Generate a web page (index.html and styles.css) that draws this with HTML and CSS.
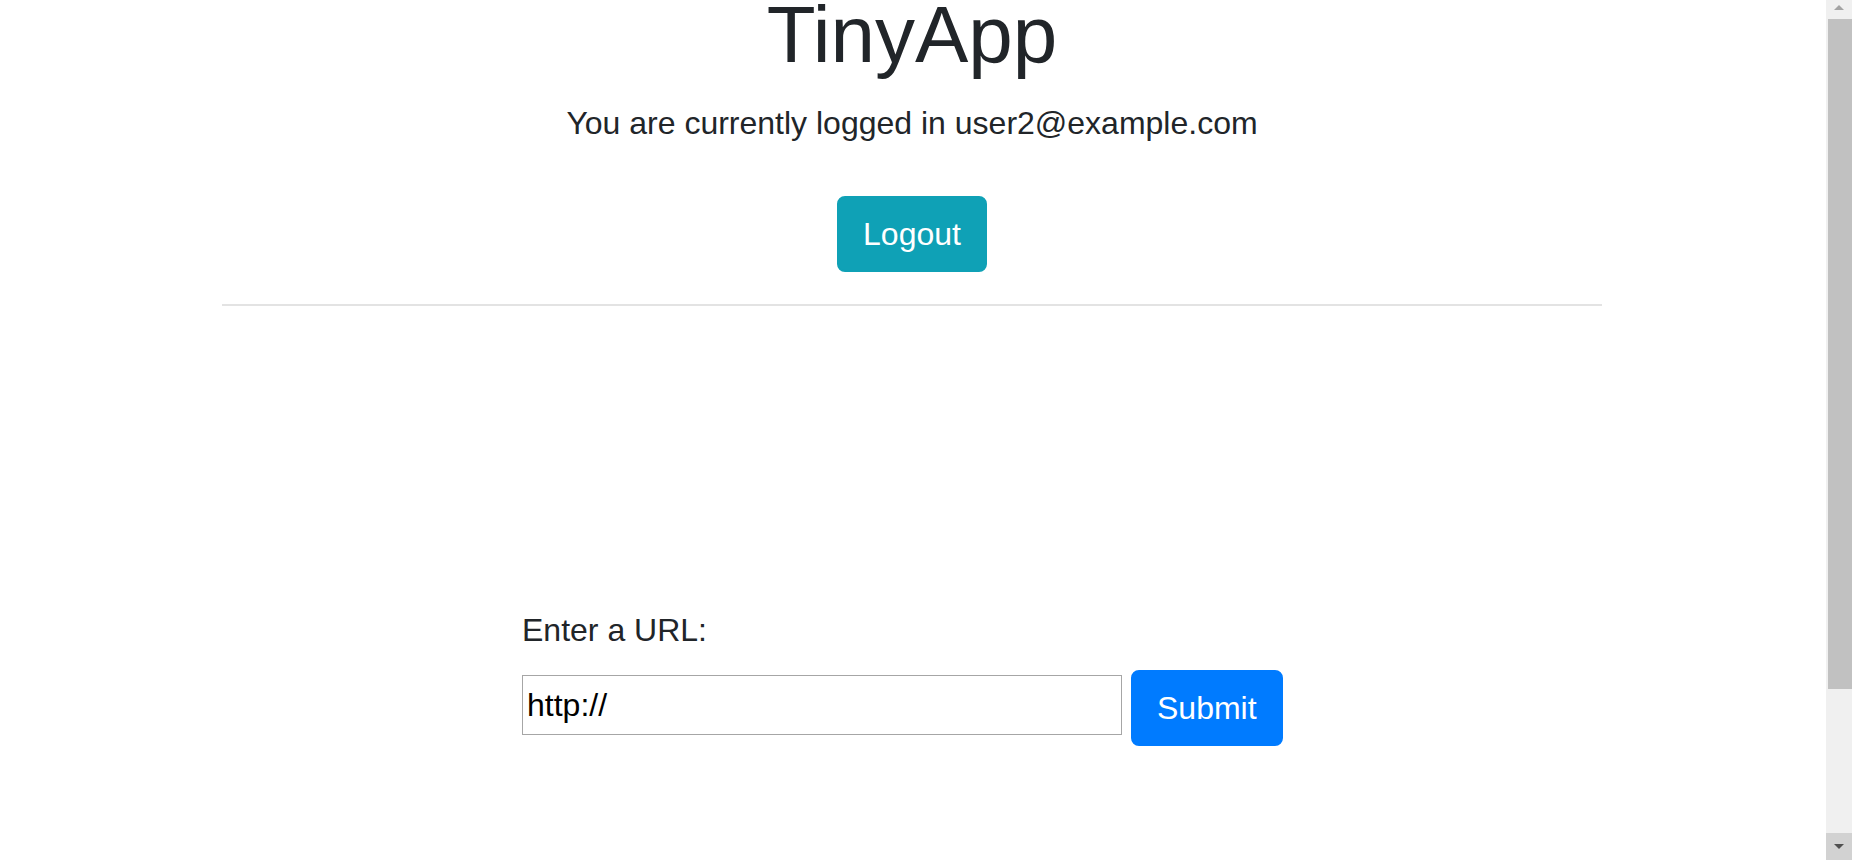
FILE: index.html
```html
<!DOCTYPE html>
<html lang="en">
<head>
<meta charset="utf-8">
<title>TinyApp</title>
<link rel="stylesheet" href="styles.css">
</head>
<body>
<main class="page">
  <header class="header">
    <h1 class="title">TinyApp</h1>
    <p class="status">You are currently logged in user2@example.com</p>
    <form class="logout-form">
      <button type="button" class="btn btn-info">Logout</button>
    </form>
  </header>
  <hr class="divider">
  <section class="url-section">
    <label class="url-label" for="longURL">Enter a URL:</label>
    <form class="url-form">
      <input id="longURL" class="url-input" type="text" value="http://">
      <button type="button" class="btn btn-primary">Submit</button>
    </form>
  </section>
</main>
<div class="scrollbar" aria-hidden="true">
  <div class="sb-arrow sb-up"><svg width="26" height="18" viewBox="0 0 26 18"><path d="M8 10 L13 5 L18 10 Z" fill="#a3a3a3"/></svg></div>
  <div class="sb-track"><div class="sb-thumb"></div></div>
  <div class="sb-arrow sb-down"><svg width="26" height="27" viewBox="0 0 26 27"><path d="M8 11 L13 16 L18 11 Z" fill="#505050"/></svg></div>
</div>
</body>
</html>
```

FILE: styles.css
```css
html, body {
  margin: 0;
  padding: 0;
}

body {
  font-family: "Liberation Sans", Arial, sans-serif;
  font-size: 32px;
  line-height: 1.5;
  color: #212529;
  background: #ffffff;
}

.page {
  width: 1380px;
  margin-left: 222px;
  padding-bottom: 288px;
}

.header {
  text-align: center;
}

.title {
  font-size: 80px;
  font-weight: 400;
  line-height: 70px;
  margin: 0 0 29px;
}

.status {
  margin: 0 0 49px;
  line-height: 48px;
}

.logout-form {
  display: flex;
  justify-content: center;
  margin: 0;
}

.btn {
  display: inline-block;
  font-family: "Liberation Sans", Arial, sans-serif;
  font-size: 32px;
  line-height: 48px;
  padding: 12px 24px;
  border: 2px solid transparent;
  border-radius: 8px;
  color: #ffffff;
  cursor: pointer;
}

.btn-info {
  background: #0fa1b6;
  border-color: #0fa1b6;
}

.btn-primary {
  background: #007bff;
  border-color: #007bff;
}

.divider {
  margin: 32px 0 0;
  border: 0;
  border-top: 2px solid #e3e3e3;
  height: 0;
}

.url-section {
  margin-top: 300px;
  padding-left: 300px;
}

.url-label {
  display: block;
  line-height: 48px;
  margin-bottom: 16px;
}

.url-form {
  display: flex;
  align-items: flex-start;
  gap: 9px;
  margin: 0;
}

.url-input {
  box-sizing: border-box;
  width: 600px;
  height: 60px;
  margin-top: 5px;
  padding: 0 4px;
  border: 1px solid #a6a6a6;
  font-family: "Liberation Sans", Arial, sans-serif;
  font-size: 32px;
  color: #000000;
  background: #ffffff;
  outline: none;
}

.scrollbar {
  position: fixed;
  top: 0;
  right: 0;
  width: 26px;
  height: 100vh;
  background: #f0f0f0;
  display: flex;
  flex-direction: column;
}

.sb-arrow {
  flex: none;
  display: flex;
}

.sb-down {
  background: #d2d2d2;
}

.sb-track {
  flex: 1;
  padding-top: 1px;
}

.sb-thumb {
  height: 670px;
  background: #c1c1c1;
  margin-left: 2px;
}
```
